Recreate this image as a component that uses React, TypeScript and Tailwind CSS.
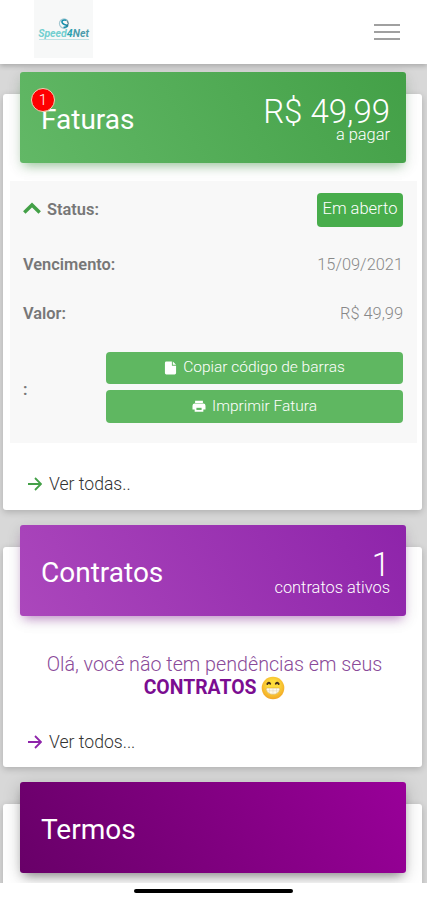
import React from "react";

type CardHeaderProps = {
  title: string;
  value?: string;
  label?: string;
  badge?: number;
  className: string;
};

function CardHeader({ title, value, label, badge, className }: CardHeaderProps) {
  return (
    <div
      className={`relative -mt-[22px] ml-[17px] mr-4 flex h-[91px] shrink-0 items-center justify-between rounded-[3px] pl-[21px] pr-4 text-white ${className}`}
    >
      {badge && (
        <span className="absolute left-[11px] top-4 flex size-[24px] items-center justify-center rounded-full border border-[#e8d9b8] bg-[#fe0000] text-[15px] leading-none font-light">
          {badge}
        </span>
      )}
      <h2 className="mt-1 text-[28px] leading-8">{title}</h2>
      {value && (
        <div className="mt-[5px] flex flex-col items-end">
          <span className="text-[33px] leading-[29px] font-light">{value}</span>
          <span className="text-[16.4px] leading-[18px] font-light">{label}</span>
        </div>
      )}
    </div>
  );
}

function ArrowLink({ text, color }: { text: string; color: string }) {
  return (
    <a href="#" className="flex items-center gap-[7px] pl-[25px] text-[17.6px] leading-6 font-light text-[#333]">
      <svg className={color} width="14" height="14" viewBox="0 0 14 14" fill="none" stroke="currentColor" strokeWidth="1.8">
        <path d="M0 7h12.5M7 1l6 6-6 6" />
      </svg>
      {text}
    </a>
  );
}

function Grin() {
  return (
    <svg width="24" height="24" viewBox="0 0 24 24" className="inline-block align-[-6px]">
      <defs>
        <radialGradient id="face" cx="50%" cy="40%" r="60%">
          <stop offset="0.4" stopColor="#fddc3c" />
          <stop offset="1" stopColor="#f2a526" />
        </radialGradient>
      </defs>
      <circle cx="12" cy="12" r="11.3" fill="url(#face)" />
      <path d="M6.3 8q1.4-2.4 2.9-.2M14.8 7.8q1.5-2.2 2.9.2" stroke="#45301d" strokeWidth="1.9" fill="none" strokeLinecap="round" />
      <path d="M6 12h12q1 0 .8 1.4c-.6 3-3.4 5-6.8 5s-6.2-2-6.8-5Q5 12 6 12z" fill="#fffbe9" stroke="#d19a35" strokeWidth=".5" />
      <path d="M5.5 14.8h13M8.5 12v5.6M12 12v6.3M15.5 12v5.6" stroke="#ddd3bd" strokeWidth=".5" />
    </svg>
  );
}

function Logo() {
  return (
    <div className="flex h-[58px] w-[59px] flex-col items-center bg-[#f7f8f8] pt-[18px]">
      <svg width="12" height="11" viewBox="0 0 12 12" fill="none">
        <circle cx="6" cy="6" r="5" stroke="#a5c8d2" strokeWidth="1.2" />
        <path d="M8.5 2.4Q4 1.6 3.8 4T8 7.6 5.5 10.5" stroke="#168fac" strokeWidth="1.8" />
        <path d="M9 2.4Q12 6 9 9" stroke="#45717f" strokeWidth="1" />
      </svg>
      <div className="flex text-[10.5px] leading-[10px] font-bold italic">
        <span className="text-[#72cfd0]">Speed</span>
        <span className="text-[#27a5b4]">4</span>
        <span className="text-[#4b9cac]">Net</span>
      </div>
      <div className="h-px w-[50px] bg-[#bfe1e4]" />
    </div>
  );
}

const card = "flex flex-col rounded-[3px] bg-white shadow-[0_2px_7px_rgba(0,0,0,0.2)]";
const button =
  "flex w-full items-center justify-center gap-1.5 rounded bg-[#5fb761] text-[15.5px] leading-none font-light text-white";
const rowLabel = "text-[16.4px] font-semibold text-[#777]";

export default function App() {
  return (
    <div className="flex h-[900px] w-[427px] flex-col overflow-hidden bg-white font-[Roboto,sans-serif]">
      <header className="z-10 flex h-16 shrink-0 items-start justify-between bg-white pl-[34px] pr-[27px] shadow-[0_2px_5px_rgba(0,0,0,0.22)]">
        <Logo />
        <button className="mt-[24px] flex flex-col gap-[5px]">
          <span className="h-0.5 w-[26px] bg-[#a0a0a0]" />
          <span className="h-0.5 w-[26px] bg-[#a0a0a0]" />
          <span className="h-0.5 w-[26px] bg-[#a0a0a0]" />
        </button>
      </header>

      <main className="flex h-[819px] flex-col gap-[37px] overflow-hidden bg-[#d8d8d8] pl-[3px] pr-[5px] pt-[30px]">
        <section className={`${card} h-[416px] shrink-0`}>
          <CardHeader
            title="Faturas"
            value="R$ 49,99"
            label="a pagar"
            badge={1}
            className="bg-linear-[60deg,#62b866,#43a047] shadow-[0_4px_16px_rgba(0,0,0,0.1),0_6px_10px_-4px_rgba(76,175,80,0.5)]"
          />
          <div className="ml-[7px] mr-[5px] mt-[18px] flex h-[262px] flex-col bg-[#f8f8f8] pl-[13px] pr-[14px]">
            <div className="flex h-[57px] items-center justify-between">
              <div className="flex items-center gap-1.5 pt-px">
                <svg className="-mt-1" width="18" height="12" viewBox="0 0 18 12" fill="none" stroke="#43a047" strokeWidth="3.5">
                  <path d="M1.3 10.4L9 3l7.7 7.4" />
                </svg>
                <span className={rowLabel}>Status:</span>
              </div>
              <span className="flex h-[34px] w-[86px] items-center justify-center rounded bg-[#48ad4c] text-[16.5px] font-light text-white">
                Em aberto
              </span>
            </div>
            <div className="flex h-[54px] items-center justify-between">
              <span className={rowLabel}>Vencimento:</span>
              <span className="text-[16.4px] font-light text-[#888]">15/09/2021</span>
            </div>
            <div className="flex h-[44px] items-center justify-between">
              <span className={rowLabel}>Valor:</span>
              <span className="text-[16.4px] font-light text-[#888]">R$ 49,99</span>
            </div>
            <div className="mt-4 flex items-center justify-between">
              <span className={`${rowLabel} pt-1.5`}>:</span>
              <div className="flex w-[297px] flex-col gap-1.5">
                <button className={`${button} h-8`}>
                  <svg width="13" height="14" viewBox="0 0 14 15" fill="currentColor">
                    <path d="M2.5.5h6V5H13v8a1.5 1.5 0 0 1-1.5 1.5h-9A1.5 1.5 0 0 1 1 13V2A1.5 1.5 0 0 1 2.5.5zM9.5.5L13 4H9.5z" />
                  </svg>
                  Copiar código de barras
                </button>
                <button className={`${button} h-[33px]`}>
                  <svg width="14" height="13" viewBox="0 0 16 15" fill="currentColor">
                    <path d="M3.5 1h9v2.5h-9zM3 4h10a2.5 2.5 0 0 1 2.5 2.5V11H13v2.5H3V11H.5V6.5A2.5 2.5 0 0 1 3 4z" />
                    <path d="M5 9h6v2.5H5z" fill="#5fb761" />
                  </svg>
                  Imprimir Fatura
                </button>
              </div>
            </div>
          </div>
          <div className="mt-[29px]">
            <ArrowLink text="Ver todas.." color="text-[#43a047]" />
          </div>
        </section>

        <section className={`${card} h-[220px] shrink-0`}>
          <CardHeader
            title="Contratos"
            value="1"
            label="contratos ativos"
            className="bg-linear-[60deg,#ab47bc,#8e24aa] shadow-[0_4px_16px_rgba(0,0,0,0.1),0_6px_10px_-4px_rgba(156,39,176,0.5)]"
          />
          <p className="mt-[37px] pl-1 text-center text-[19.7px] leading-[23px] font-light text-[#8a4a99]">
            Olá, você não tem pendências em seus
            <br />
            <b className="text-[19.4px] font-bold text-[#7b0d91]">CONTRATOS</b> <Grin />
          </p>
          <div className="mt-[30px]">
            <ArrowLink text="Ver todos..." color="text-[#8e24aa]" />
          </div>
        </section>

        <section className={`${card} h-[221px] shrink-0`}>
          <CardHeader
            title="Termos"
            className="bg-linear-[60deg,#680068,#990099] shadow-[0_4px_18px_rgba(0,0,0,0.18),0_6px_10px_-4px_rgba(0,0,0,0.4)]"
          />
        </section>
      </main>

      <footer className="flex h-[17px] shrink-0 justify-center bg-white pt-1.5">
        <div className="h-1 w-[159px] rounded-full bg-black" />
      </footer>
    </div>
  );
}
